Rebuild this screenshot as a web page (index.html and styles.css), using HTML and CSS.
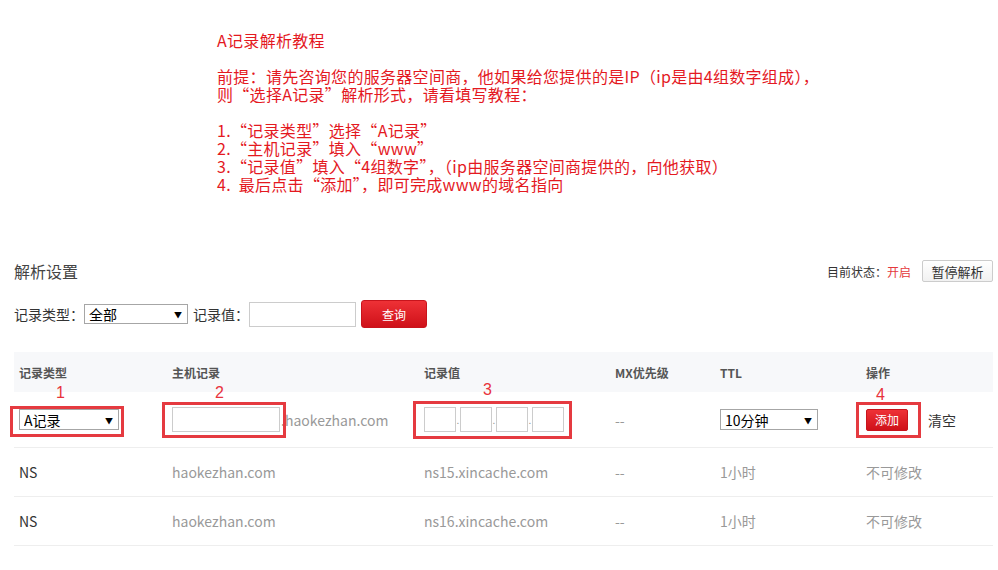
FILE: index.html
```html
<!DOCTYPE html>
<html lang="zh-CN">
	<head>
		<meta charset="UTF-8">
		<title>解析设置</title>
		<link rel="stylesheet" href="styles.css">
	</head>
	<body>
		<div class="guide">
			<p>A记录解析教程</p>
			<p>前提：请先咨询您的服务器空间商，他如果给您提供的是IP（ip是由4组数字组成），<br>则“选择A记录”解析形式，请看填写教程：</p>
			<p>1.“记录类型”选择“A记录”<br>2.“主机记录”填入“www”<br>3.“记录值”填入“4组数字”，（ip由服务器空间商提供的，向他获取）<br>4.&nbsp; 最后点击“添加”，即可完成www的域名指向</p>
		</div>
		<div class="panel">
			<div class="panel-head">
				<h2>解析设置</h2>
				<div class="status">
					<span>目前状态：<span class="on">开启</span></span>
					<button class="btn-plain">暂停解析</button>
				</div>
			</div>
			<div class="filter">
				<span>记录类型：</span>
				<span class="sel sel-filter"><select><option>全部</option></select></span>
				<span>记录值：</span>
				<input class="txt txt-value" type="text">
				<button class="btn-red btn-search">查询</button>
			</div>
			<table class="records">
				<colgroup>
					<col class="c1"><col class="c2"><col class="c3"><col class="c4"><col class="c5"><col class="c6">
				</colgroup>
				<thead>
					<tr>
						<th>记录类型</th>
						<th>主机记录</th>
						<th>记录值</th>
						<th>MX优先级</th>
						<th>TTL</th>
						<th>操作</th>
					</tr>
				</thead>
				<tbody>
					<tr class="edit-row">
						<td>
							<span class="mark mark1">1</span><span class="hl hl1"></span>
							<span class="sel sel-type"><select><option>A记录</option></select></span>
						</td>
						<td>
							<span class="mark mark2">2</span><span class="hl hl2"></span>
							<div class="host"><input class="txt txt-host" type="text"><span class="muted">.haokezhan.com</span></div>
						</td>
						<td>
							<span class="mark mark3">3</span><span class="hl hl3"></span>
							<div class="ip">
								<input class="txt txt-ip" type="text"><i>.</i><input class="txt txt-ip" type="text"><i>.</i><input class="txt txt-ip" type="text"><i>.</i><input class="txt txt-ip" type="text">
							</div>
						</td>
						<td class="muted">--</td>
						<td><span class="sel sel-ttl"><select><option>10分钟</option></select></span></td>
						<td>
							<span class="mark mark4">4</span><span class="hl hl4"></span>
							<div class="ops"><button class="btn-red btn-add">添加</button><span>清空</span></div>
						</td>
					</tr>
					<tr>
						<td>NS</td>
						<td class="muted">haokezhan.com</td>
						<td class="muted">ns15.xincache.com</td>
						<td class="muted">--</td>
						<td class="muted">1小时</td>
						<td class="muted">不可修改</td>
					</tr>
					<tr>
						<td>NS</td>
						<td class="muted">haokezhan.com</td>
						<td class="muted">ns16.xincache.com</td>
						<td class="muted">--</td>
						<td class="muted">1小时</td>
						<td class="muted">不可修改</td>
					</tr>
				</tbody>
			</table>
		</div>
	</body>
</html>
```

FILE: styles.css
```css
body {
margin: 0;
background-color: #fff;
color: #333;
font-family: "Noto Sans CJK SC", sans-serif;
font-size: 14px;
}
button {
font-family: inherit;
cursor: pointer;
}
.guide {
padding: 31px 0 0 217px;
color: #e4191f;
font-size: 16px;
line-height: 18px;
letter-spacing: 0.3px;
}
.guide p {
margin: 0 0 18px 0;
}
.guide p:last-child {
margin-bottom: 0;
}
.panel {
margin: 67px 5px 0 14px;
}
.panel-head {
display: flex;
justify-content: space-between;
align-items: center;
height: 22px;
}
.panel-head h2 {
margin: 0;
font-size: 16px;
font-weight: normal;
color: #444;
}
.status {
display: flex;
align-items: center;
gap: 11px;
font-size: 12px;
color: #333;
}
.status .on {
color: #e4393c;
}
.btn-plain {
width: 71px;
height: 22px;
padding: 0;
border: 1px solid #ccc;
border-radius: 2px;
background: linear-gradient(#fff, #f1f1f1);
font-size: 13px;
color: #333;
}
.filter {
display: flex;
align-items: center;
gap: 5px;
margin-top: 18px;
height: 28px;
}
.filter .sel {
margin-left: -5px;
}
.filter .txt-value {
margin-left: -5px;
}
.sel {
position: relative;
display: inline-block;
}
.sel select {
appearance: none;
display: block;
box-sizing: border-box;
margin: 0;
padding: 0 0 0 4px;
border: 1px solid #a6a6a6;
background: #fff;
font-family: inherit;
font-size: 14px;
line-height: 18px;
color: #000;
}
.sel::after {
content: "▼";
position: absolute;
right: 6px;
top: 50%;
transform: translateY(-50%);
font-size: 8px;
color: #000;
pointer-events: none;
}
.sel-filter select {
width: 104px;
height: 20px;
}
.sel-type select {
width: 100px;
height: 21px;
}
.sel-ttl select {
width: 98px;
height: 21px;
}
.txt {
box-sizing: border-box;
margin: 0;
height: 25px;
border: 1px solid #ccc;
background: #fff;
}
.txt-value {
width: 107px;
}
.btn-red {
padding: 0;
border: 1px solid #c8141c;
border-radius: 3px;
background: linear-gradient(#ee3136, #cf1119);
color: #fff;
font-size: 12px;
}
.btn-search {
width: 66px;
height: 28px;
}
.records {
margin-top: 24px;
width: 979px;
border-collapse: collapse;
table-layout: fixed;
}
.records .c1 { width: 153px; }
.records .c2 { width: 252px; }
.records .c3 { width: 191px; }
.records .c4 { width: 105px; }
.records .c5 { width: 146px; }
.records .c6 { width: 132px; }
.records th {
height: 40px;
padding: 0 5px;
background-color: #f7f8fa;
text-align: left;
font-size: 12px;
font-weight: bold;
color: #555;
}
.records td {
position: relative;
height: 48px;
padding: 0 5px;
border-bottom: 1px solid #eee;
font-size: 14px;
color: #333;
}
.records .edit-row td {
height: 55px;
}
.records td.muted, .muted {
color: #999;
}
.host, .ip, .ops {
display: flex;
align-items: center;
}
.txt-host {
width: 108px;
margin-right: 1px;
}
.ip i {
width: 4px;
font-style: normal;
font-size: 10px;
color: #999;
text-align: center;
}
.txt-ip {
width: 32px;
}
.btn-add {
width: 42px;
height: 22px;
border-radius: 2px;
margin-right: 20px;
}
.ops span {
color: #333;
}
.mark {
position: absolute;
top: -7px;
font-family: "Liberation Sans", sans-serif;
font-size: 16px;
line-height: 16px;
color: #e8333c;
}
.mark1 { left: 42px; }
.mark2 { left: 48px; }
.mark3 { left: 64px; top: -10px; }
.mark4 { left: 15px; top: -5px; }
.hl {
position: absolute;
box-sizing: border-box;
border: 3px solid #e53a40;
pointer-events: none;
}
.hl1 { left: -4px; top: 14px; width: 114px; height: 31px; }
.hl2 { left: -5px; top: 10px; width: 124px; height: 36px; }
.hl3 { left: -6px; top: 9px; width: 159px; height: 38px; }
.hl4 { left: -5px; top: 10px; width: 65px; height: 36px; }
```
